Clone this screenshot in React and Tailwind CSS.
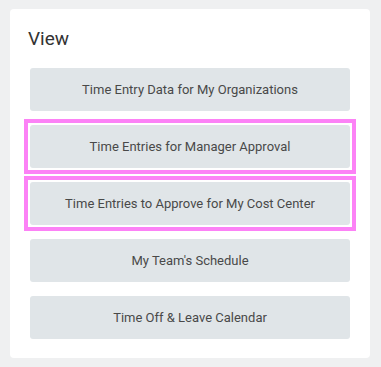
export default function App() {
  const items = [
    { label: "Time Entry Data for My Organizations", hl: false },
    { label: "Time Entries for Manager Approval", hl: true },
    { label: "Time Entries to Approve for My Cost Center", hl: true },
    { label: "My Team's Schedule", hl: false },
    { label: "Time Off & Leave Calendar", hl: false },
  ];
  return (
    <div className="w-[381px] h-[367px] bg-[#eff0f1] pt-[9px] pl-[10px]" style={{ fontFamily: "Roboto, 'Liberation Sans', sans-serif" }}>
      <div className="w-[360px] h-[349px] bg-white rounded-[4px] pt-[18px] px-[20px]">
        <h2 className="text-[19px] leading-[24px] text-[#333333] -ml-[2px]">View</h2>
        <div className="mt-[17px] flex flex-col gap-[14px]">
          {items.map((it) => {
            const btn = (
              <button
                key={it.label}
                className="h-[43px] w-[320px] rounded-[3px] bg-[#e0e5e8] text-[13px] text-[#494949] flex items-center justify-center"
              >
                {it.label}
              </button>
            );
            return it.hl ? (
              <div key={it.label} className="-mx-[6px] -my-[6px] border-4 border-[#fc82f6] p-[2px]">
                {btn}
              </div>
            ) : (
              btn
            );
          })}
        </div>
      </div>
    </div>
  );
}
